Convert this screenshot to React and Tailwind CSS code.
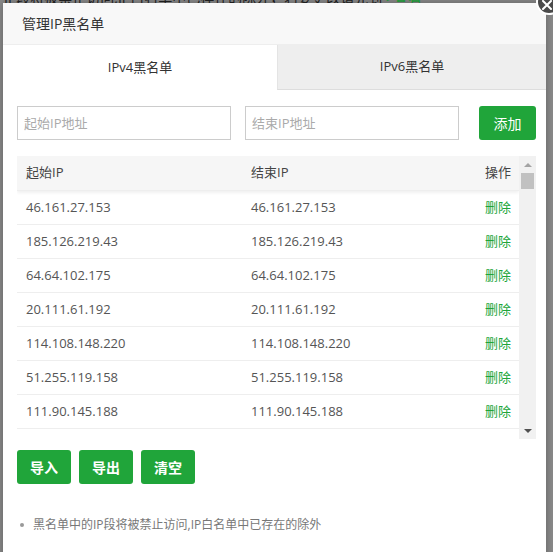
import React from 'react';

const rows = [
  ['46.161.27.153', '46.161.27.153'],
  ['185.126.219.43', '185.126.219.43'],
  ['64.64.102.175', '64.64.102.175'],
  ['20.111.61.192', '20.111.61.192'],
  ['114.108.148.220', '114.108.148.220'],
  ['51.255.119.158', '51.255.119.158'],
  ['111.90.145.188', '111.90.145.188'],
  ['45.146.165.37', '45.146.165.37'],
];

const font = { fontFamily: '"Open Sans", "Noto Sans CJK SC", sans-serif' };

const App = () => {
  return (
    <div className="relative w-[553px] h-[552px] overflow-hidden bg-[#8a8a8a]" style={font}>
      {/* page behind the overlay */}
      <div className="text-[14px] text-[#222] leading-none -mt-[9px] pl-1">
        IP段将被禁止访问,IP白名单中已存在的除外，若要更改请先到 <span className="text-[#20a53a]">&gt;查看</span>
      </div>

      {/* modal */}
      <div className="absolute left-[3px] top-[3px] w-[543px] h-[560px] bg-white shadow-[0_0_8px_rgba(0,0,0,0.3)]">
        <div className="h-[42px] bg-[#f8f8f8] border-b border-[#eee] flex items-center pl-[19px] text-[14px] text-[#333]">
          管理IP黑名单
        </div>

        {/* tabs */}
        <div className="flex h-[45px] text-[13px] text-[#333]">
          <div className="w-[274px] flex items-center justify-center bg-white">IPv4黑名单</div>
          <div className="flex-1 flex items-center justify-center bg-[#eeeeee] border-b border-[#ddd] border-l border-l-[#e4e4e4]">IPv6黑名单</div>
        </div>

        <div className="pl-[14px] pr-[10px] pt-[16px]">
          {/* inputs */}
          <div className="flex items-center">
            <input
              className="w-[214px] h-[34px] border border-[#ccc] px-[6px] text-[13px] outline-none placeholder:text-[#aaa]"
              placeholder="起始IP地址"
            />
            <input
              className="ml-[14px] w-[214px] h-[34px] border border-[#ccc] px-[6px] text-[13px] outline-none placeholder:text-[#aaa]"
              placeholder="结束IP地址"
            />
            <button className="ml-[20px] w-[57px] h-[34px] rounded-[3px] bg-[#20a53a] text-white text-[14px]">添加</button>
          </div>

          {/* table */}
          <div className="mt-[16px] flex h-[283px]">
            <div className="flex-1 overflow-hidden text-[13px]">
              <div className="flex h-[35px] items-center bg-[#f6f6f6] text-[#444] shadow-[0_2px_3px_rgba(0,0,0,0.06)] border-b border-[#eee] relative z-10">
                <div className="w-[234px] pl-[9px]">起始IP</div>
                <div className="flex-1">结束IP</div>
                <div className="pr-[8px]">操作</div>
              </div>
              {rows.map((r, i) => (
                <div key={i} className="flex h-[34px] items-center border-b border-[#eee] text-[#555]">
                  <div className="w-[234px] pl-[9px]">{r[0]}</div>
                  <div className="flex-1">{r[1]}</div>
                  <div className="pr-[8px] text-[#20a53a]">删除</div>
                </div>
              ))}
            </div>
            {/* scrollbar */}
            <div className="w-[17px] bg-[#f1f1f1] flex flex-col items-center">
              <div className="h-[17px] flex items-center justify-center">
                <div className="w-0 h-0 border-l-[4px] border-r-[4px] border-b-[4px] border-l-transparent border-r-transparent border-b-[#a3a3a3]" />
              </div>
              <div className="w-[13px] h-[16px] bg-[#c1c1c1]" />
              <div className="flex-1" />
              <div className="h-[17px] flex items-center justify-center">
                <div className="w-0 h-0 border-l-[4px] border-r-[4px] border-t-[4px] border-l-transparent border-r-transparent border-t-[#505050]" />
              </div>
            </div>
          </div>

          {/* actions */}
          <div className="mt-[11px] flex gap-[8px]">
            {['导入', '导出', '清空'].map((t) => (
              <button key={t} className="w-[54px] h-[34px] rounded-[3px] bg-[#20a53a] text-white text-[14px] font-bold">
                {t}
              </button>
            ))}
          </div>

          <ul className="mt-[32px] text-[12px] text-[#777]">
            <li className="flex items-center">
              <span className="w-[4px] h-[4px] rounded-full bg-[#999] ml-[3px] mr-[9px]" />
              黑名单中的IP段将被禁止访问,IP白名单中已存在的除外
            </li>
          </ul>
        </div>
      </div>

      {/* close button */}
      <div className="absolute left-[536px] top-[-11px] w-[26px] h-[26px] rounded-full bg-[#4a4a4a] border-2 border-white flex items-center justify-center">
        <svg width="12" height="12" viewBox="0 0 12 12" className="mt-[6px] mr-[4px]">
          <path d="M2 2L10 10M10 2L2 10" stroke="white" strokeWidth="2" strokeLinecap="round" />
        </svg>
      </div>
    </div>
  );
};

export default App;
